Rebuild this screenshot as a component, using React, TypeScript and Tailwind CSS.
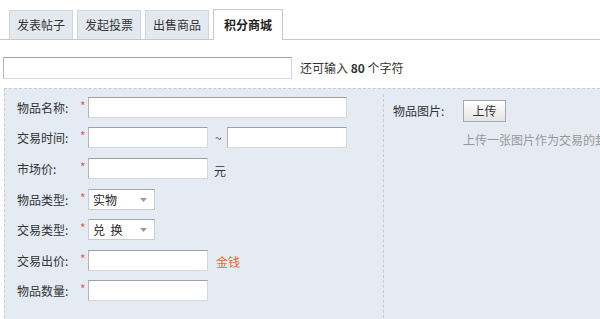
import React from "react";

const font = { fontFamily: '"Noto Sans CJK SC", "Liberation Sans", sans-serif' };

function Input({ w }: { w: string }) {
  return (
    <div
      className={`${w} h-[21px] shrink-0 bg-white border border-[#d4d8dc] border-t-[#a0a0a0] border-l-[#b4b4b4]`}
    />
  );
}

function Select({ label }: { label: string }) {
  return (
    <div className="w-[67px] h-[21px] bg-white border border-[#c8ccd0] border-t-[#a8a8a8] flex items-center justify-between pl-[4px] pr-[7px] text-[12px] text-[#222]">
      <span className="whitespace-pre">{label}</span>
      <svg width="7" height="4" viewBox="0 0 7 4">
        <path d="M0 0 L7 0 L3.5 4 Z" fill="#9a9a9a" />
      </svg>
    </div>
  );
}

function Row({ label, children }: { label: string; children: React.ReactNode }) {
  return (
    <div className="flex items-center h-[21px]">
      <div className="w-[63px] shrink-0 text-[12px] text-[#333]">{label}</div>
      <div className="w-[8px] shrink-0 text-[#e0606a] text-[12px] leading-none self-start pt-[3px]">*</div>
      {children}
    </div>
  );
}

export default function App() {
  return (
    <div className="w-[600px] h-[319px] bg-white overflow-hidden" style={font}>
      <div className="flex items-end gap-[4px] pl-[9px] pt-[9px] border-b border-[#c8c8c8] h-[40px]">
        {["发表帖子", "发起投票", "出售商品"].map((t) => (
          <div
            key={t}
            className="h-[29px] px-[7px] flex items-center justify-center bg-[#e4e9ef] border border-b-0 border-[#d0d6dd] text-[12px] text-[#333]"
          >
            {t}
          </div>
        ))}
        <div className="h-[31px] -mb-px px-[10px] flex items-center justify-center bg-white border border-b-0 border-[#c8c8c8] text-[12px] font-bold text-[#222]">
          积分商城
        </div>
      </div>

      <div className="flex items-center mt-[17px] pl-[3px]">
        <div className="w-[289px] h-[22px] bg-white border border-[#d4d8dc] border-t-[#a0a0a0] border-l-[#b4b4b4]" />
        <div className="ml-[8px] text-[12px] text-[#333]">
          还可输入 <b className="text-[#333]">80</b> 个字符
        </div>
      </div>

      <div className="mt-[9px] ml-[4px] h-[240px] bg-[#e4ebf3] border-t border-l border-dashed border-[#c4ccd6] flex">
        <div className="w-[378px] shrink-0 pl-[12px] pt-[8px] flex flex-col gap-[9px]">
          <Row label="物品名称:">
            <Input w="w-[259px]" />
          </Row>
          <Row label="交易时间:">
            <Input w="w-[120px]" />
            <span className="ml-[7px] mr-[5px] text-[12px] text-[#555] mt-[1px]">~</span>
            <Input w="w-[120px]" />
          </Row>
          <div className="mt-[1px]">
            <Row label="市场价:">
              <Input w="w-[120px]" />
              <span className="ml-[6px] text-[12px] text-[#333] mt-[4px]">元</span>
            </Row>
          </div>
          <div className="mt-[1px]">
            <Row label="物品类型:">
              <Select label="实物" />
            </Row>
          </div>
          <Row label="交易类型:">
            <Select label={"兑  换"} />
          </Row>
          <div className="mt-[1px]">
            <Row label="交易出价:">
              <Input w="w-[120px]" />
              <span className="ml-[8px] text-[12px] text-[#e26a3a] mt-[2px]">金钱</span>
            </Row>
          </div>
          <Row label="物品数量:">
            <Input w="w-[120px]" />
          </Row>
        </div>
        <div className="mt-[5px] border-l border-dashed border-[#c4ccd6] pl-[9px] pt-[6px] flex-1 min-w-0 overflow-hidden">
          <div className="flex items-start">
            <div className="w-[70px] shrink-0 text-[12px] text-[#333] pt-[2px]">物品图片:</div>
            <div className="w-[43px] h-[22px] shrink-0 flex items-center justify-center bg-gradient-to-b from-[#ffffff] to-[#e4e4e4] border border-[#a8a8a8] text-[12px] text-[#333]">
              上传
            </div>
          </div>
          <div className="ml-[70px] mt-[9px] text-[12px] text-[#999] whitespace-nowrap">
            上传一张图片作为交易的封面
          </div>
        </div>
      </div>
    </div>
  );
}
